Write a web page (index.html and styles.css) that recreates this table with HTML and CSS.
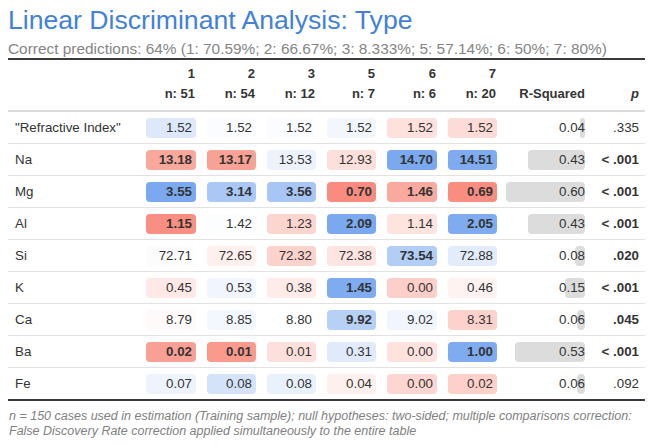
FILE: index.html
```html
<!DOCTYPE html>
<html>
<head>
<meta charset="utf-8">
<link rel="stylesheet" href="styles.css">
</head>
<body>
<div class="page">
  <h1 class="title">Linear Discriminant Analysis: Type</h1>
  <div class="subtitle">Correct predictions: 64% (1: 70.59%; 2: 66.67%; 3: 8.333%; 5: 57.14%; 6: 50%; 7: 80%)</div>
  <table class="lda">
    <colgroup>
      <col class="c-label">
      <col class="c-v1">
      <col class="c-v">
      <col class="c-v">
      <col class="c-v">
      <col class="c-v1">
      <col class="c-v">
      <col class="c-r2">
      <col class="c-p">
    </colgroup>
    <thead>
      <tr class="head1">
        <th></th><th>1</th><th>2</th><th>3</th><th>5</th><th>6</th><th>7</th><th class="h-r2"></th><th class="h-p"></th>
      </tr>
      <tr class="head2">
        <th></th><th>n: 51</th><th>n: 54</th><th>n: 12</th><th>n: 7</th><th>n: 6</th><th>n: 20</th><th class="h-r2">R-Squared</th><th class="h-p"><i>p</i></th>
      </tr>
    </thead>
    <tbody>
      <tr>
        <td class="label">"Refractive Index"</td>
        <td class="v"><span class="cell" style="background:#dde8fb">1.52</span></td>
        <td class="v"><span class="cell" style="background:#fafcff">1.52</span></td>
        <td class="v"><span class="cell" style="background:#fbfcff">1.52</span></td>
        <td class="v"><span class="cell" style="background:#f2f7fe">1.52</span></td>
        <td class="v"><span class="cell" style="background:#fee1dd">1.52</span></td>
        <td class="v"><span class="cell" style="background:#fddcd7">1.52</span></td>
        <td class="r2"><div class="r2box"><span class="bar" style="width:6.7%"></span><span class="r2val">0.04</span></div></td>
        <td class="p">.335</td>
      </tr>
      <tr>
        <td class="label">Na</td>
        <td class="v"><span class="cell b" style="background:#f9a89c">13.18</span></td>
        <td class="v"><span class="cell b" style="background:#f8a295">13.17</span></td>
        <td class="v"><span class="cell" style="background:#edf3fd">13.53</span></td>
        <td class="v"><span class="cell" style="background:#fde0dc">12.93</span></td>
        <td class="v"><span class="cell b" style="background:#7aa9ef">14.70</span></td>
        <td class="v"><span class="cell b" style="background:#7facf0">14.51</span></td>
        <td class="r2"><div class="r2box"><span class="bar" style="width:71.7%"></span><span class="r2val">0.43</span></div></td>
        <td class="p b">&lt; .001</td>
      </tr>
      <tr>
        <td class="label">Mg</td>
        <td class="v"><span class="cell b" style="background:#7aa9ef">3.55</span></td>
        <td class="v"><span class="cell b" style="background:#a9c8f5">3.14</span></td>
        <td class="v"><span class="cell b" style="background:#a7c6f5">3.56</span></td>
        <td class="v"><span class="cell b" style="background:#f98c7f">0.70</span></td>
        <td class="v"><span class="cell b" style="background:#f9a99e">1.46</span></td>
        <td class="v"><span class="cell b" style="background:#f98d80">0.69</span></td>
        <td class="r2"><div class="r2box"><span class="bar" style="width:100%"></span><span class="r2val">0.60</span></div></td>
        <td class="p b">&lt; .001</td>
      </tr>
      <tr>
        <td class="label">Al</td>
        <td class="v"><span class="cell b" style="background:#f98f82">1.15</span></td>
        <td class="v"><span class="cell" style="background:#fcfdff">1.42</span></td>
        <td class="v"><span class="cell" style="background:#fdd5cf">1.23</span></td>
        <td class="v"><span class="cell b" style="background:#7aa9ef">2.09</span></td>
        <td class="v"><span class="cell" style="background:#fee3df">1.14</span></td>
        <td class="v"><span class="cell b" style="background:#7facf0">2.05</span></td>
        <td class="r2"><div class="r2box"><span class="bar" style="width:71.7%"></span><span class="r2val">0.43</span></div></td>
        <td class="p b">&lt; .001</td>
      </tr>
      <tr>
        <td class="label">Si</td>
        <td class="v"><span class="cell" style="background:#fcfcfd">72.71</span></td>
        <td class="v"><span class="cell" style="background:#fff0ed">72.65</span></td>
        <td class="v"><span class="cell" style="background:#fcd2cc">72.32</span></td>
        <td class="v"><span class="cell" style="background:#ffe5e1">72.38</span></td>
        <td class="v"><span class="cell b" style="background:#b2cef6">73.54</span></td>
        <td class="v"><span class="cell" style="background:#e2ecfc">72.88</span></td>
        <td class="r2"><div class="r2box"><span class="bar" style="width:13.3%"></span><span class="r2val">0.08</span></div></td>
        <td class="p b">.020</td>
      </tr>
      <tr>
        <td class="label">K</td>
        <td class="v"><span class="cell" style="background:#ffe9e6">0.45</span></td>
        <td class="v"><span class="cell" style="background:#f1f6fe">0.53</span></td>
        <td class="v"><span class="cell" style="background:#ffebe8">0.38</span></td>
        <td class="v"><span class="cell b" style="background:#7facf0">1.45</span></td>
        <td class="v"><span class="cell" style="background:#fdcfc9">0.00</span></td>
        <td class="v"><span class="cell" style="background:#fff3f1">0.46</span></td>
        <td class="r2"><div class="r2box"><span class="bar" style="width:25%"></span><span class="r2val">0.15</span></div></td>
        <td class="p b">&lt; .001</td>
      </tr>
      <tr>
        <td class="label">Ca</td>
        <td class="v"><span class="cell" style="background:#fffafa">8.79</span></td>
        <td class="v"><span class="cell" style="background:#f3f7fe">8.85</span></td>
        <td class="v"><span class="cell" style="background:#ffffff">8.80</span></td>
        <td class="v"><span class="cell b" style="background:#b7d1f6">9.92</span></td>
        <td class="v"><span class="cell" style="background:#f1f6fe">9.02</span></td>
        <td class="v"><span class="cell" style="background:#fdd2cc">8.31</span></td>
        <td class="r2"><div class="r2box"><span class="bar" style="width:10%"></span><span class="r2val">0.06</span></div></td>
        <td class="p b">.045</td>
      </tr>
      <tr>
        <td class="label">Ba</td>
        <td class="v"><span class="cell b" style="background:#f99f93">0.02</span></td>
        <td class="v"><span class="cell b" style="background:#f99a8d">0.01</span></td>
        <td class="v"><span class="cell" style="background:#fde0dc">0.01</span></td>
        <td class="v"><span class="cell" style="background:#e0eafc">0.31</span></td>
        <td class="v"><span class="cell" style="background:#ffe2de">0.00</span></td>
        <td class="v"><span class="cell b" style="background:#7facf0">1.00</span></td>
        <td class="r2"><div class="r2box"><span class="bar" style="width:88.3%"></span><span class="r2val">0.53</span></div></td>
        <td class="p b">&lt; .001</td>
      </tr>
      <tr class="last">
        <td class="label">Fe</td>
        <td class="v"><span class="cell" style="background:#eef4fe">0.07</span></td>
        <td class="v"><span class="cell" style="background:#d4e3fa">0.08</span></td>
        <td class="v"><span class="cell" style="background:#e9f1fd">0.08</span></td>
        <td class="v"><span class="cell" style="background:#fff0ee">0.04</span></td>
        <td class="v"><span class="cell" style="background:#fdd6d1">0.00</span></td>
        <td class="v"><span class="cell" style="background:#fdd0ca">0.02</span></td>
        <td class="r2"><div class="r2box"><span class="bar" style="width:10%"></span><span class="r2val">0.06</span></div></td>
        <td class="p">.092</td>
      </tr>
    </tbody>
  </table>
  <div class="footer">n = 150 cases used in estimation (Training sample); null hypotheses: two-sided; multiple comparisons correction:<br>False Discovery Rate correction applied simultaneously to the entire table</div>
</div>
</body>
</html>
```

FILE: styles.css
```css
body {
  margin: 0;
  background: #ffffff;
  font-family: "Liberation Sans", Arial, sans-serif;
  color: #333333;
}

.page {
  padding: 5px 5px 0 8px;
}

.title {
  margin: 0;
  font-size: 26.6px;
  line-height: 30px;
  font-weight: normal;
  color: #4281d6;
  white-space: nowrap;
}

.subtitle {
  margin-top: 4px;
  font-size: 15.4px;
  line-height: 19px;
  color: #858585;
  white-space: nowrap;
}

.lda {
  width: 637px;
  table-layout: fixed;
  border-collapse: separate;
  border-spacing: 0;
  font-size: 13.33px;
}

.c-label { width: 134px; }
.c-v1 { width: 61px; }
.c-v { width: 60px; }
.c-r2 { width: 90px; }
.c-p { width: 51px; }

.lda th {
  font-weight: bold;
  font-size: 13px;
  text-align: right;
  padding: 0 8px 0 0;
  line-height: 20px;
  color: #333333;
  white-space: nowrap;
}

.lda th.h-r2 { padding-right: 9px; }
.lda th.h-p { padding-right: 6px; }

.head1 th {
  border-top: 2px solid #3a3a3a;
  padding-top: 4px;
}

.head2 th {
  border-bottom: 2px solid #dcdcdc;
  padding-bottom: 6px;
}

.lda td {
  padding: 6px 0 5px 0;
  border-bottom: 1px solid #e2e2e2;
  line-height: 20px;
  white-space: nowrap;
}

.lda tr.last td {
  border-bottom: 2px solid #3a3a3a;
}

.lda td.label {
  padding-left: 7px;
}

.lda td.v {
  padding-left: 4px;
  padding-right: 7px;
}

.cell {
  display: block;
  height: 20px;
  border-radius: 4px;
  text-align: right;
  padding-right: 4px;
}

.b {
  font-weight: bold;
}

.lda td.r2 {
  padding-left: 2px;
  padding-right: 9px;
}

.r2box {
  position: relative;
  height: 20px;
  text-align: right;
}

.bar {
  position: absolute;
  right: 0;
  top: 0;
  bottom: 0;
  background: #dcdcdc;
  border-radius: 4px;
}

.r2val {
  position: relative;
}

.lda td.p {
  text-align: right;
  padding-right: 6px;
}

.footer {
  margin-top: 8px;
  font-size: 12.5px;
  line-height: 15px;
  font-style: italic;
  color: #808080;
  padding-left: 1px;
  white-space: nowrap;
}
```
